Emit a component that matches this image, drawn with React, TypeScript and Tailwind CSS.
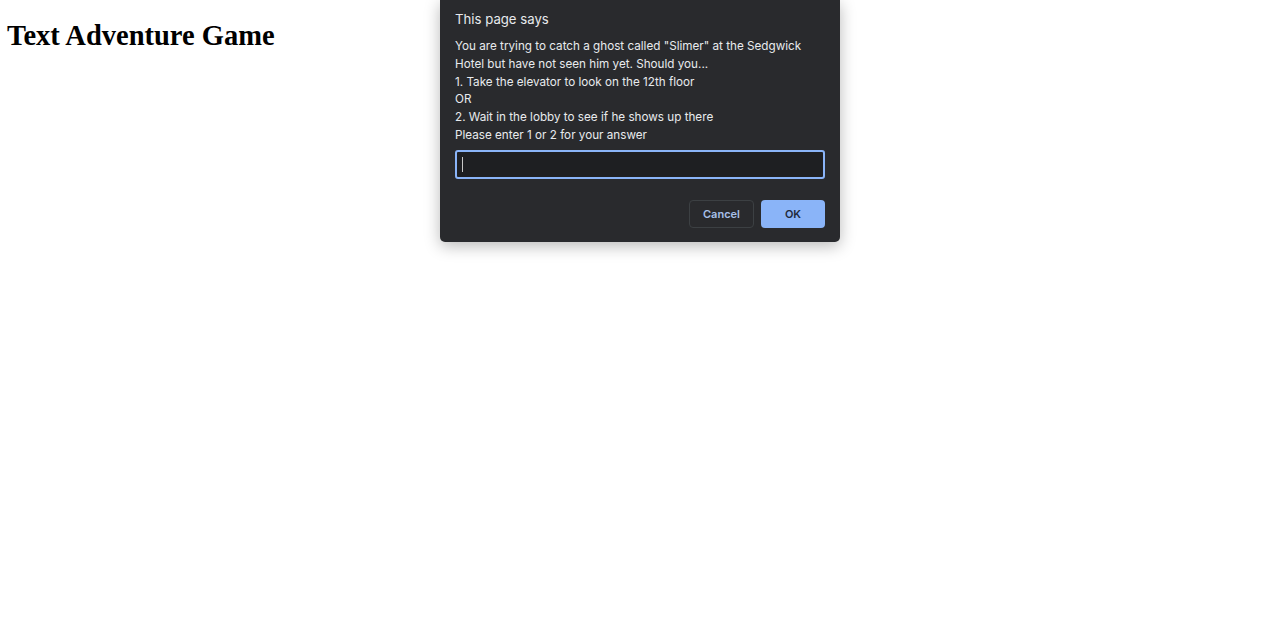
import { useState } from 'react';

const lines = [
  'You are trying to catch a ghost called "Slimer" at the Sedgwick',
  'Hotel but have not seen him yet. Should you...',
  '1. Take the elevator to look on the 12th floor',
  'OR',
  '2. Wait in the lobby to see if he shows up there',
  'Please enter 1 or 2 for your answer',
];

export default function App() {
  const [answer, setAnswer] = useState('');

  return (
    <div className="relative min-h-[620px] bg-white px-[7px]">
      <h1 className="pt-[19px] text-[28.5px] font-bold leading-[33px] text-black [font-family:'Liberation_Serif',serif]">
        Text Adventure Game
      </h1>

      {/* Prompt dialog */}
      <div className="absolute left-[440px] top-0 w-[400px] rounded-b-[5px] bg-[#292a2d] px-[15px] pb-[14px] pt-[10px] text-[#e8eaed] shadow-[0_4px_16px_rgba(0,0,0,0.28)] [font-family:Inter,'Noto_Sans',sans-serif]">
        <div className="text-[13.2px] leading-[18px]">This page says</div>
        <div className="mt-[10px] whitespace-nowrap text-[11.7px] leading-[17.8px]">
          {lines.map((l) => (
            <div key={l}>{l}</div>
          ))}
        </div>
        <div className="relative mt-[5px]">
          <input
            autoFocus
            value={answer}
            onChange={(e) => setAnswer(e.target.value)}
            className="block h-[29px] w-full rounded-[3px] border-2 border-[#8ab4f8] bg-[#1e1f22] px-[6px] text-[13px] text-[#e8eaed] outline-none"
          />
          {answer === '' && (
            <span className="pointer-events-none absolute left-[7px] top-[7px] h-[15px] w-px bg-[#c8c8c8]" />
          )}
        </div>
        <div className="mt-[21px] flex justify-end gap-[7px]">
          <button className="h-[28px] w-[65px] rounded-[4px] border border-[#3c4043] bg-[#292a2d] text-[11px] font-semibold text-[#a8c0e8]">
            Cancel
          </button>
          <button className="h-[28px] w-[64px] rounded-[4px] bg-[#8ab4f8] text-[11px] font-semibold text-[#1f2a3c]">
            OK
          </button>
        </div>
      </div>
    </div>
  );
}
